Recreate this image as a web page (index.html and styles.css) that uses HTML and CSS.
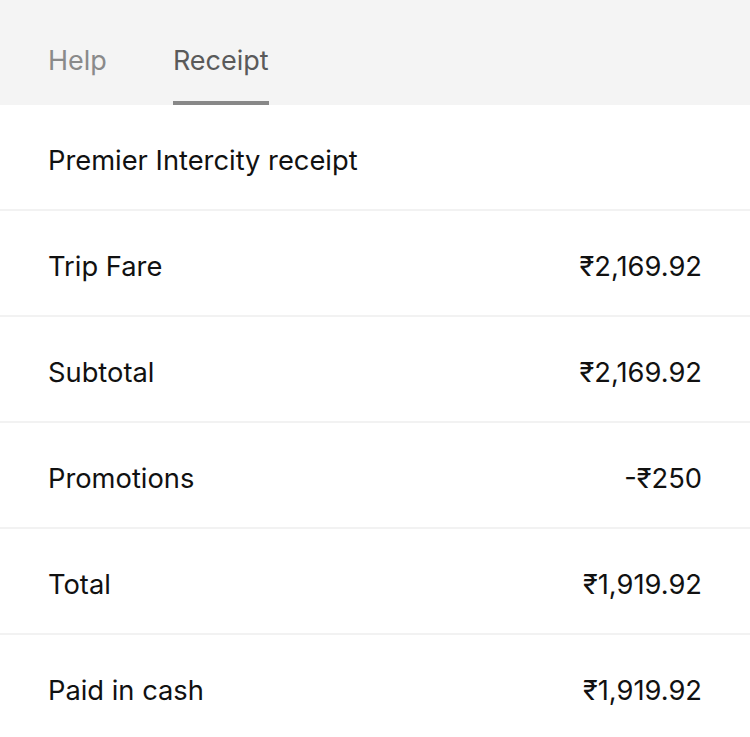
FILE: index.html
```html
<!DOCTYPE html>
<html>
<head>
<meta charset="utf-8">
<link rel="stylesheet" href="styles.css">
</head>
<body>
<div class="tabs">
  <div class="tab">Help</div>
  <div class="tab active">Receipt</div>
</div>
<div class="list">
  <div class="row"><span>Premier Intercity receipt</span></div>
  <div class="row"><span>Trip Fare</span><span>₹2,169.92</span></div>
  <div class="row"><span>Subtotal</span><span>₹2,169.92</span></div>
  <div class="row"><span>Promotions</span><span>-₹250</span></div>
  <div class="row"><span>Total</span><span>₹1,919.92</span></div>
  <div class="row"><span>Paid in cash</span><span>₹1,919.92</span></div>
</div>
</body>
</html>
```
FILE: styles.css
```css
html, body { margin: 0; padding: 0; background: #fff; }
body { font-family: "Inter", "Noto Sans", sans-serif; color: #111; }
.tabs {
  display: flex;
  gap: 66px;
  background: #f4f4f4;
  height: 105px;
  padding: 0 48px;
  box-sizing: border-box;
}
.tab {
  display: flex;
  align-items: center;
  font-size: 27px;
  color: #8a8a8a;
  box-sizing: border-box;
  padding-top: 20px;
  border-bottom: 4px solid transparent;
}
.tab.active { color: #5a5a5a; border-bottom-color: #888; }
.row {
  display: flex;
  justify-content: space-between;
  align-items: center;
  height: 106px;
  padding: 6px 48px 0;
  box-sizing: border-box;
  font-size: 27.3px;
  border-bottom: 2px solid #f2f2f2;
}
```
